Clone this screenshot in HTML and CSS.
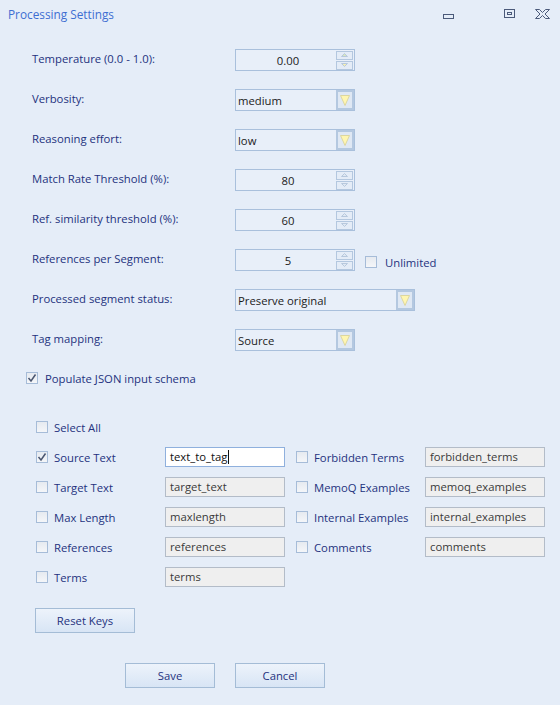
FILE: index.html
```html
<!DOCTYPE html>
<html>
<head>
<meta charset="utf-8">
<title>Processing Settings</title>
<link rel="stylesheet" href="styles.css">
</head>
<body>
<div class="window">
  <div class="titlebar">
    <span class="title">Processing Settings</span>
    <div class="winbtns">
      <svg class="wb wb-min" width="12" height="6" viewBox="0 0 12 6"><rect x="0.5" y="0.5" width="10" height="4" fill="none" stroke="#4b5a7a"/></svg>
      <svg class="wb wb-max" width="12" height="10" viewBox="0 0 12 10"><rect x="0.5" y="0.5" width="10" height="8" fill="none" stroke="#4b5a7a"/><rect x="3.5" y="3.5" width="4" height="2" fill="none" stroke="#4b5a7a"/></svg>
      <svg class="wb wb-close" width="16" height="11" viewBox="0 0 16 11"><path d="M0.5 0.5H4.5L7.5 3.5L10.5 0.5H14.5L10 5L14.5 9.5H10.5L7.5 6.5L4.5 9.5H0.5L5 5Z" fill="none" stroke="#4b5a7a"/></svg>
    </div>
  </div>

  <div class="settings">
    <div class="row">
      <span class="label">Temperature (0.0 - 1.0):</span>
      <div class="spin"><span class="val">0.00</span><div class="spinbtns"><span class="sb"><svg width="7" height="4" viewBox="0 0 7 4"><path d="M0.5 3.5L3.5 0.5L6.5 3.5Z" fill="#d7e6c0" stroke="#b7c8dd"/></svg></span><span class="sb"><svg width="7" height="4" viewBox="0 0 7 4"><path d="M0.5 0.5L3.5 3.5L6.5 0.5Z" fill="#f4efb4" stroke="#b7c8dd"/></svg></span></div></div>
    </div>
    <div class="row">
      <span class="label">Verbosity:</span>
      <div class="combo"><span class="ctext">medium</span><span class="cbtn"><svg width="10" height="11" viewBox="0 0 10 11"><path d="M0.5 0.5H9.5L5 10.5Z" fill="#fff6b0" stroke="#dcd6a0"/></svg></span></div>
    </div>
    <div class="row">
      <span class="label">Reasoning effort:</span>
      <div class="combo"><span class="ctext">low</span><span class="cbtn"><svg width="10" height="11" viewBox="0 0 10 11"><path d="M0.5 0.5H9.5L5 10.5Z" fill="#fff6b0" stroke="#dcd6a0"/></svg></span></div>
    </div>
    <div class="row">
      <span class="label">Match Rate Threshold (%):</span>
      <div class="spin"><span class="val">80</span><div class="spinbtns"><span class="sb"><svg width="7" height="4" viewBox="0 0 7 4"><path d="M0.5 3.5L3.5 0.5L6.5 3.5Z" fill="#dfe8f2" stroke="#b7c8dd"/></svg></span><span class="sb"><svg width="7" height="4" viewBox="0 0 7 4"><path d="M0.5 0.5L3.5 3.5L6.5 0.5Z" fill="#dfe8f2" stroke="#b7c8dd"/></svg></span></div></div>
    </div>
    <div class="row">
      <span class="label">Ref. similarity threshold (%):</span>
      <div class="spin"><span class="val">60</span><div class="spinbtns"><span class="sb"><svg width="7" height="4" viewBox="0 0 7 4"><path d="M0.5 3.5L3.5 0.5L6.5 3.5Z" fill="#dfe8f2" stroke="#b7c8dd"/></svg></span><span class="sb"><svg width="7" height="4" viewBox="0 0 7 4"><path d="M0.5 0.5L3.5 3.5L6.5 0.5Z" fill="#dfe8f2" stroke="#b7c8dd"/></svg></span></div></div>
    </div>
    <div class="row">
      <span class="label">References per Segment:</span>
      <div class="spin"><span class="val">5</span><div class="spinbtns"><span class="sb"><svg width="7" height="4" viewBox="0 0 7 4"><path d="M0.5 3.5L3.5 0.5L6.5 3.5Z" fill="#dfe8f2" stroke="#b7c8dd"/></svg></span><span class="sb"><svg width="7" height="4" viewBox="0 0 7 4"><path d="M0.5 0.5L3.5 3.5L6.5 0.5Z" fill="#dfe8f2" stroke="#b7c8dd"/></svg></span></div></div>
      <label class="check unlimited"><span class="box"></span><span class="clabel">Unlimited</span></label>
    </div>
    <div class="row">
      <span class="label">Processed segment status:</span>
      <div class="combo wide"><span class="ctext">Preserve original</span><span class="cbtn"><svg width="10" height="11" viewBox="0 0 10 11"><path d="M0.5 0.5H9.5L5 10.5Z" fill="#fff6b0" stroke="#dcd6a0"/></svg></span></div>
    </div>
    <div class="row">
      <span class="label">Tag mapping:</span>
      <div class="combo"><span class="ctext">Source</span><span class="cbtn"><svg width="10" height="11" viewBox="0 0 10 11"><path d="M0.5 0.5H9.5L5 10.5Z" fill="#fff6b0" stroke="#dcd6a0"/></svg></span></div>
    </div>
  </div>

  <label class="check populate"><span class="box checked"><svg width="10" height="10" viewBox="0 0 10 10"><path d="M1.5 5L4 8L8.5 1.5" fill="none" stroke="#4a5670" stroke-width="1.5"/></svg></span><span class="clabel">Populate JSON input schema</span></label>

  <div class="fields">
    <label class="check"><span class="box"></span><span class="clabel">Select All</span></label>
    <span></span><span></span><span></span>

    <label class="check"><span class="box checked"><svg width="10" height="10" viewBox="0 0 10 10"><path d="M1.5 5L4 8L8.5 1.5" fill="none" stroke="#4a5670" stroke-width="1.5"/></svg></span><span class="clabel">Source Text</span></label>
    <div class="tb active">text_to_tag<span class="caret"></span></div>
    <label class="check"><span class="box"></span><span class="clabel">Forbidden Terms</span></label>
    <div class="tb">forbidden_terms</div>

    <label class="check"><span class="box"></span><span class="clabel">Target Text</span></label>
    <div class="tb">target_text</div>
    <label class="check"><span class="box"></span><span class="clabel">MemoQ Examples</span></label>
    <div class="tb">memoq_examples</div>

    <label class="check"><span class="box"></span><span class="clabel">Max Length</span></label>
    <div class="tb">maxlength</div>
    <label class="check"><span class="box"></span><span class="clabel">Internal Examples</span></label>
    <div class="tb">internal_examples</div>

    <label class="check"><span class="box"></span><span class="clabel">References</span></label>
    <div class="tb">references</div>
    <label class="check"><span class="box"></span><span class="clabel">Comments</span></label>
    <div class="tb">comments</div>

    <label class="check"><span class="box"></span><span class="clabel">Terms</span></label>
    <div class="tb">terms</div>
    <span></span><span></span>
  </div>

  <div class="reset-row"><button class="btn reset">Reset Keys</button></div>
  <div class="actions">
    <button class="btn">Save</button>
    <button class="btn">Cancel</button>
  </div>
</div>
</body>
</html>
```

FILE: styles.css
```css
* { box-sizing: border-box; }
html, body { margin: 0; padding: 0; }
body {
  width: 560px;
  height: 705px;
  background: #e5edf8;
  font-family: "Open Sans", "Noto Sans", sans-serif;
  font-size: 11.3px;
  color: #24327e;
  overflow: hidden;
}
.window { display: flex; flex-direction: column; }

.titlebar {
  height: 28px;
  display: flex;
  align-items: center;
  justify-content: space-between;
  padding-left: 8px;
}
.title { color: #3d6ed2; font-size: 11.8px; }
.winbtns { display: flex; align-items: center; }
.wb { display: block; }
.wb-min { margin-right: 49px; margin-top: 5px; }
.wb-max { margin-right: 19px; }
.wb-close { margin-right: 9px; }

.settings {
  margin-top: 21px;
  padding-left: 32px;
  display: flex;
  flex-direction: column;
  gap: 18px;
}
.row { display: flex; align-items: center; height: 22px; }
.label { width: 203px; margin-top: -3px; white-space: nowrap; }

.spin, .combo {
  width: 120px;
  height: 22px;
  border: 1px solid #a9c0dc;
  background: #e8eff9;
  display: flex;
  align-items: center;
  color: #1b1b1b;
}
.spin .val { flex: 1; text-align: center; padding-left: 4px; }
.spinbtns {
  width: 17px;
  margin-right: 1px;
  display: flex;
  flex-direction: column;
  gap: 1px;
}
.sb {
  height: 9px;
  border: 1px solid #b3c7df;
  background: #e4ecf7;
  display: flex;
  align-items: center;
  justify-content: center;
}
.sb svg { display: block; }

.combo.wide { width: 180px; }
.combo .ctext { flex: 1; padding-left: 2px; }
.cbtn {
  width: 18px;
  height: 20px;
  border: 2px solid #b4c8e0;
  background: #dfe8f4;
  display: flex;
  align-items: center;
  justify-content: center;
}
.cbtn svg { display: block; }

.check { display: flex; align-items: center; white-space: nowrap; }
.box {
  width: 12px;
  height: 12px;
  border: 1px solid #a6bcd8;
  background: linear-gradient(#e6eaf0, #f4f6f9);
  display: flex;
  align-items: center;
  justify-content: center;
  flex: none;
}
.box svg { display: block; }
.clabel { margin-left: 6px; color: #24327e; }
.unlimited { margin-left: 10px; margin-top: 4px; }
.unlimited .clabel { margin-left: 8px; }

.populate { margin-top: 21px; margin-left: 26px; height: 12px; }
.populate .clabel { margin-left: 7px; }

.fields {
  margin-top: 33px;
  padding-left: 36px;
  display: grid;
  grid-template-columns: 129px 131px 129px 120px;
  grid-template-rows: repeat(6, 20px);
  row-gap: 10px;
  align-items: center;
}
.tb {
  width: 120px;
  height: 20px;
  border: 1px solid #b3bcc8;
  background: #efefef;
  color: #3a3a3a;
  padding-left: 4px;
  display: flex;
  align-items: center;
  line-height: 1;
  white-space: nowrap;
}
.tb.active {
  background: #ffffff;
  border-color: #8fb0dd;
  color: #111;
}
.caret { width: 1px; height: 14px; background: #111; margin-left: 1px; }

.reset-row { margin-top: 21px; padding-left: 35px; }
.btn {
  width: 90px;
  height: 25px;
  border: 1px solid #a4bcd6;
  background: linear-gradient(#edf3fb, #d8e5f5);
  font-family: inherit;
  font-size: 11.3px;
  color: #24327e;
  padding: 0;
}
.btn.reset { width: 100px; }
.actions {
  margin-top: 30px;
  padding-left: 125px;
  display: flex;
  gap: 20px;
}
```
